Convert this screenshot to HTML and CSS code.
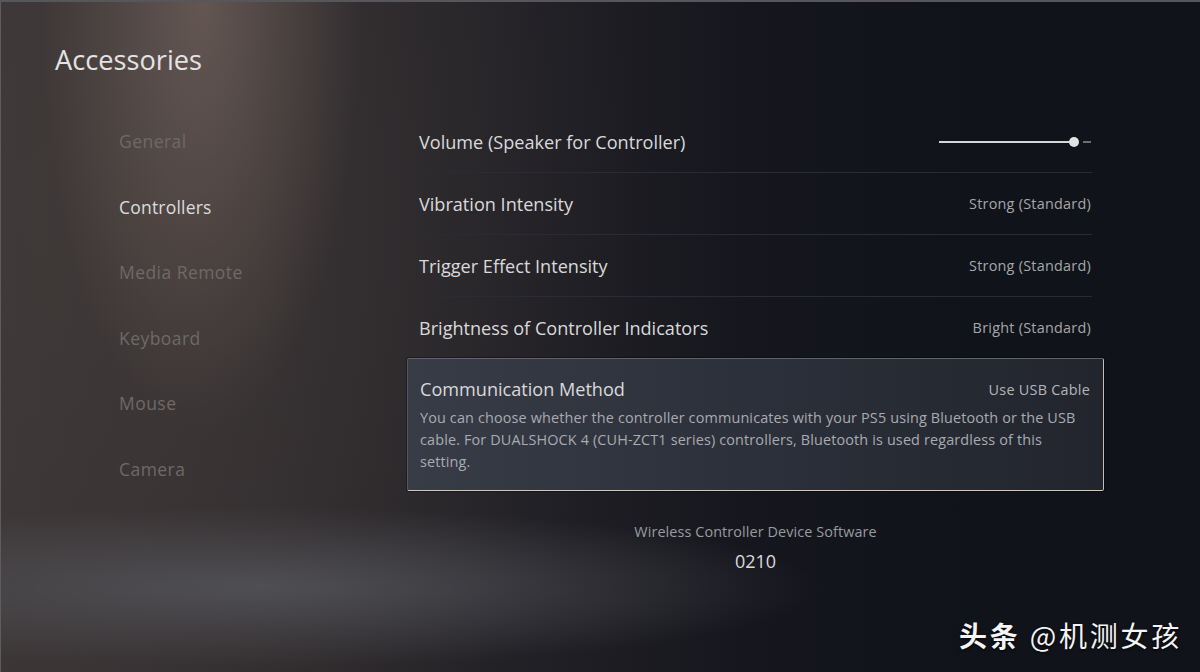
FILE: index.html
```html
<!DOCTYPE html>
<html lang="en">
<head>
<meta charset="utf-8">
<title>Accessories</title>
<link rel="stylesheet" href="styles.css">
</head>
<body>
<div class="screen">
  <header class="title">Accessories</header>
  <div class="content">
    <nav class="nav">
      <div class="nav-item">General</div>
      <div class="nav-item active">Controllers</div>
      <div class="nav-item">Media Remote</div>
      <div class="nav-item">Keyboard</div>
      <div class="nav-item">Mouse</div>
      <div class="nav-item">Camera</div>
    </nav>
    <section class="panel">
      <div class="row">
        <span class="row-label">Volume (Speaker for Controller)</span>
        <span class="slider">
          <span class="track-fill"></span>
          <span class="knob"></span>
          <span class="track-rest"></span>
        </span>
      </div>
      <div class="row">
        <span class="row-label">Vibration Intensity</span>
        <span class="row-value">Strong (Standard)</span>
      </div>
      <div class="row">
        <span class="row-label">Trigger Effect Intensity</span>
        <span class="row-value">Strong (Standard)</span>
      </div>
      <div class="row last">
        <span class="row-label">Brightness of Controller Indicators</span>
        <span class="row-value">Bright (Standard)</span>
      </div>
      <div class="row-selected">
        <div class="sel-head">
          <span class="row-label">Communication Method</span>
          <span class="row-value">Use USB Cable</span>
        </div>
        <p class="sel-desc">You can choose whether the controller communicates with your PS5 using Bluetooth or the USB cable. For DUALSHOCK 4 (CUH-ZCT1 series) controllers, Bluetooth is used regardless of this setting.</p>
      </div>
      <div class="version">
        <div class="version-label">Wireless Controller Device Software</div>
        <div class="version-num">0210</div>
      </div>
    </section>
  </div>
  <div class="watermark"><b>头条</b> @机测女孩</div>
</div>
</body>
</html>
```
FILE: styles.css
```css
* { box-sizing: border-box; }
html, body { margin: 0; padding: 0; }
body {
  width: 1200px;
  height: 672px;
  overflow: hidden;
  font-family: "Open Sans", "Noto Sans", sans-serif;
  background: #11131a;
}
.screen {
  position: relative;
  width: 1200px;
  height: 672px;
  border-top: 2px solid #56565b;
  border-left: 1px solid #5e5c5c;
  background:
    radial-gradient(ellipse 560px 80px at 260px 585px, rgba(88, 89, 95, 0.75), rgba(88, 89, 95, 0) 100%),
    radial-gradient(ellipse 160px 430px at 200px 0px, rgba(150, 128, 118, 0.45), rgba(150, 128, 118, 0) 100%),
    radial-gradient(ellipse 520px 700px at 120px 200px, rgba(70, 62, 60, 0.55), rgba(70, 62, 60, 0) 100%),
    linear-gradient(90deg, #3a3536 0%, #302c2e 22%, #222126 42%, #16171e 62%, #11131a 80%, #11131a 100%);
}
.title {
  padding: 41px 0 0 54px;
  height: 107px;
  font-size: 27.2px;
  line-height: 34px;
  color: #e4e2e2;
}
.content {
  display: flex;
}
.nav {
  width: 406px;
  padding-left: 118px;
  display: flex;
  flex-direction: column;
}
.nav-item {
  height: 65.6px;
  line-height: 65.6px;
  font-size: 17.5px;
  letter-spacing: 0.45px;
  color: #6e6968;
}
.nav-item.active { color: #dcdcdc; letter-spacing: 0.2px; }
.panel {
  width: 697px;
  padding-top: 2px;
}
.row {
  margin: 0 12px;
  height: 62px;
  display: flex;
  align-items: center;
  justify-content: space-between;
  border-bottom: 1px solid #2a2c33;
}
.row.last { border-bottom: none; height: 61px; }
.row-label {
  font-size: 18.1px;
  color: #d9d9db;
}
.row-value {
  font-size: 14.4px;
  letter-spacing: 0.25px;
  color: #a6a7aa;
  margin-right: 1px;
}
.slider {
  display: flex;
  align-items: center;
  width: 152px;
  margin-right: 1px;
}
.track-fill {
  width: 132px;
  height: 2px;
  background: #d6d6d8;
}
.knob {
  width: 10px;
  height: 10px;
  border-radius: 50%;
  background: #e2e2e4;
  margin-left: -2px;
}
.track-rest {
  width: 8px;
  height: 2px;
  background: #6d6e72;
  margin-left: 4px;
}
.row-selected {
  height: 133px;
  padding: 18px 13px 0 12px;
  border: 1px solid;
  border-color: #5f6470 #c9bca8 #d6c8b4 #535866;
  border-radius: 2px;
  background: linear-gradient(90deg, #383c47 0%, #2d313b 45%, #22252e 100%);
  box-shadow: 0 0 0 1px rgba(0, 0, 0, 0.35);
}
.sel-head {
  display: flex;
  justify-content: space-between;
  align-items: center;
  height: 24px;
}
.sel-head .row-value { color: #b4b5b9; margin-right: 0; }
.sel-desc {
  margin: 6px 0 0;
  font-size: 14.4px;
  letter-spacing: 0.15px;
  line-height: 22px;
  color: #a9abb1;
}
.version {
  padding-top: 31px;
  text-align: center;
}
.version-label {
  font-size: 14.4px;
  letter-spacing: 0.1px;
  line-height: 20px;
  color: #9a9b9f;
}
.version-num {
  margin-top: 7px;
  font-size: 18px;
  line-height: 24px;
  color: #dadadc;
}
.watermark {
  position: absolute;
  left: 958px;
  top: 614px;
  font-family: "Noto Sans CJK SC", "Noto Sans", sans-serif;
  font-size: 28px;
  line-height: 38px;
  letter-spacing: 2.8px;
  color: #f4f4f4;
  text-shadow: 0 1px 3px rgba(0, 0, 0, 0.8);
  white-space: nowrap;
}
.watermark b { font-weight: 700; }
```
